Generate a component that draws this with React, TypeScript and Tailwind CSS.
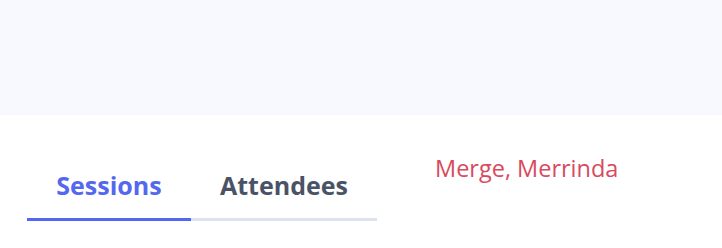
export default function App() {
  return (
    <div className="w-[722px] h-[248px] bg-white overflow-hidden" style={{ fontFamily: '"Open Sans", sans-serif' }}>
      <div className="h-[115px] bg-[#f8f9fe]" />
      <div className="flex items-start pl-[27px] pt-[37px]">
        <div className="flex mt-[17px]">
          <div className="w-[164px] text-center text-[25px] font-bold leading-[32px] pb-[17px] text-[#5468ef] border-b-[3px] border-[#5468ef]">
            Sessions
          </div>
          <div className="w-[186px] text-center text-[25px] font-bold leading-[32px] pb-[17px] text-[#4a5366] border-b-[3px] border-[#dde3ec]">
            Attendees
          </div>
        </div>
        <div className="ml-[58px] text-[23.5px] leading-[32px] text-[#d74a5e]">Merge, Merrinda</div>
      </div>
    </div>
  );
}
